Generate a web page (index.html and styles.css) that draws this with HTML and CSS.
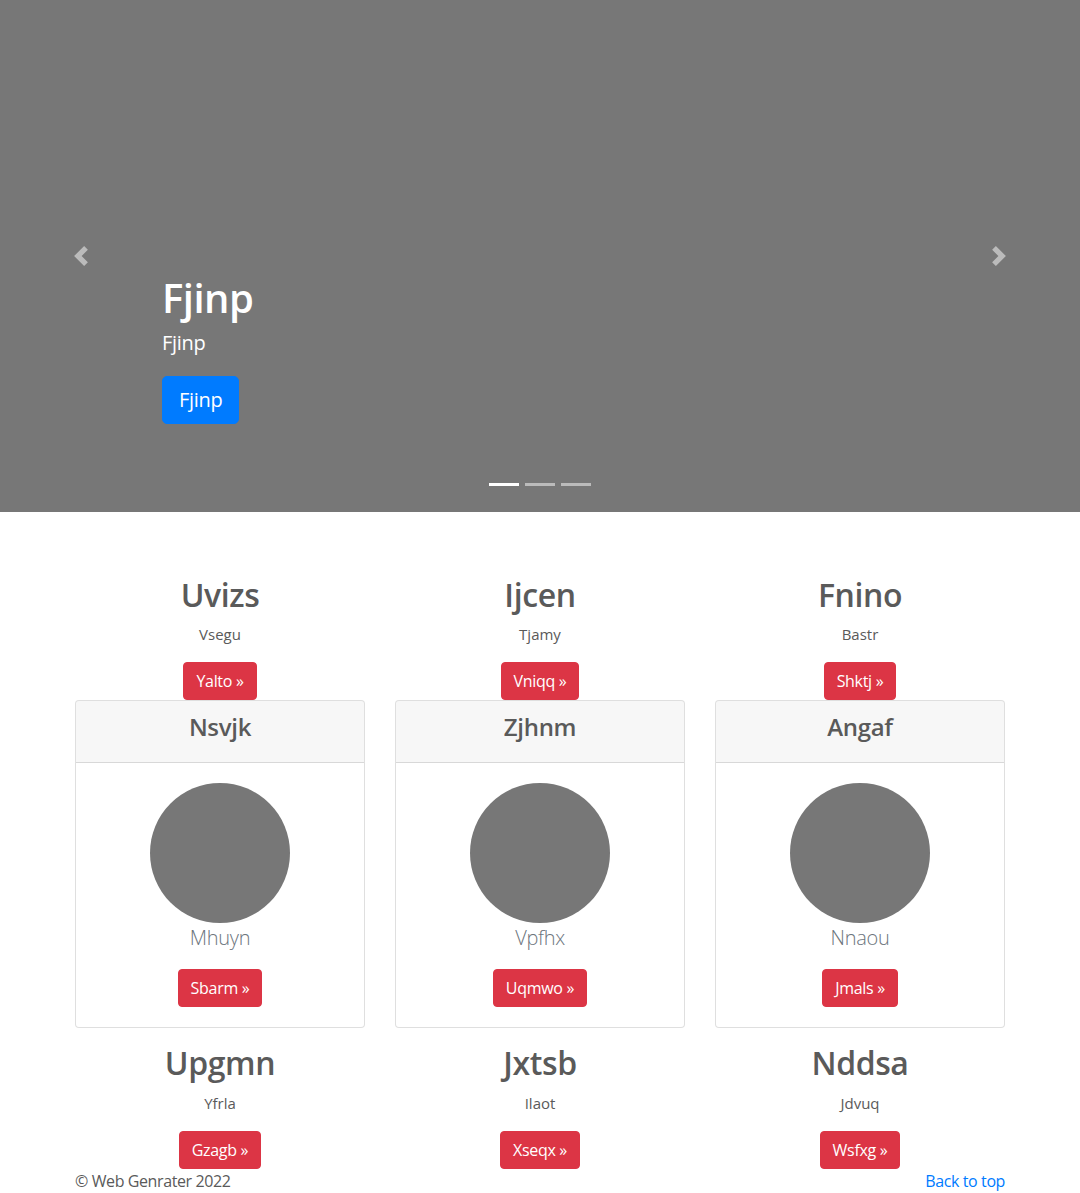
FILE: index.html
```html
<!DOCTYPE html>
<html lang="en">
<head>
<meta charset="utf-8">
<title>Carousel</title>
<link rel="stylesheet" href="styles.css">
</head>
<body>
<div class="carousel">
  <div class="slide"></div>
  <div class="caption">
    <h1>Fjinp</h1>
    <p>Fjinp</p>
    <p class="cta"><a class="btn btn-lg btn-primary" href="#">Fjinp</a></p>
  </div>
  <a class="ctrl prev" href="#"><svg width="20" height="20" viewBox="0 0 8 8"><path fill="#fff" d="M5.25 0l-4 4 4 4 1.5-1.5-2.5-2.5 2.5-2.5-1.5-1.5z"/></svg></a>
  <a class="ctrl next" href="#"><svg width="20" height="20" viewBox="0 0 8 8"><path fill="#fff" d="M2.75 0l-1.5 1.5 2.5 2.5-2.5 2.5 1.5 1.5 4-4-4-4z"/></svg></a>
  <ol class="indicators"><li class="active"></li><li></li><li></li></ol>
</div>

<div class="container marketing">
  <div class="row features">
    <div class="feature"><h2>Uvizs</h2><p>Vsegu</p><a class="btn btn-danger" href="#">Yalto &raquo;</a></div>
    <div class="feature"><h2>Ijcen</h2><p>Tjamy</p><a class="btn btn-danger" href="#">Vniqq &raquo;</a></div>
    <div class="feature"><h2>Fnino</h2><p>Bastr</p><a class="btn btn-danger" href="#">Shktj &raquo;</a></div>
  </div>
  <div class="row cards">
    <div class="card">
      <div class="card-header"><h4>Nsvjk</h4></div>
      <div class="card-body"><div class="circle"></div><p class="lead">Mhuyn</p><a class="btn btn-danger" href="#">Sbarm &raquo;</a></div>
    </div>
    <div class="card">
      <div class="card-header"><h4>Zjhnm</h4></div>
      <div class="card-body"><div class="circle"></div><p class="lead">Vpfhx</p><a class="btn btn-danger" href="#">Uqmwo &raquo;</a></div>
    </div>
    <div class="card">
      <div class="card-header"><h4>Angaf</h4></div>
      <div class="card-body"><div class="circle"></div><p class="lead">Nnaou</p><a class="btn btn-danger" href="#">Jmals &raquo;</a></div>
    </div>
  </div>
  <div class="row features">
    <div class="feature"><h2>Upgmn</h2><p>Yfrla</p><a class="btn btn-danger" href="#">Gzagb &raquo;</a></div>
    <div class="feature"><h2>Jxtsb</h2><p>Ilaot</p><a class="btn btn-danger" href="#">Xseqx &raquo;</a></div>
    <div class="feature"><h2>Nddsa</h2><p>Jdvuq</p><a class="btn btn-danger" href="#">Wsfxg &raquo;</a></div>
  </div>
</div>

<footer class="container footer">
  <p>&copy; Web Genrater 2022</p>
  <a href="#">Back to top</a>
</footer>
</body>
</html>
```

FILE: styles.css
```css
* { box-sizing: border-box; }
html, body { margin: 0; padding: 0; }
body {
  font-family: "Open Sans", "Noto Sans", sans-serif;
  font-size: 16px;
  line-height: 1.5;
  color: #5a5a5a;
  background: #fff;
}
a { text-decoration: none; }

.carousel {
  position: relative;
  height: 512px;
  margin-bottom: 64px;
  background: #777;
  overflow: hidden;
}
.slide { height: 100%; background: #777; }
.caption {
  position: absolute;
  left: 15%;
  right: 15%;
  bottom: 48px;
  padding: 20px 0;
  color: #fff;
  text-align: left;
  z-index: 10;
}
.caption h1 {
  margin: 0 0 8px;
  font-size: 40px;
  font-weight: 600;
  line-height: 1.2;
  letter-spacing: -0.5px;
}
.caption p { margin: 0 0 20px; font-size: 20px; line-height: 26px; letter-spacing: -0.3px; }
.caption p.cta { margin-bottom: 20px; display: flex; }

.btn {
  display: inline-block;
  border: 1px solid transparent;
  border-radius: 4px;
  padding: 6px 12px;
  font-size: 16px;
  line-height: 24px;
  color: #fff;
  text-align: center;
  white-space: nowrap;
  letter-spacing: -0.3px;
}
.btn-lg { padding: 8px 16px; font-size: 20px; line-height: 30px; border-radius: 5px; }
.btn-primary { background: #007bff; border-color: #007bff; }
.btn-danger { background: #dc3545; border-color: #dc3545; }

.ctrl {
  position: absolute;
  top: 0;
  bottom: 0;
  width: 15%;
  display: flex;
  align-items: center;
  justify-content: center;
  opacity: .5;
  z-index: 5;
}
.ctrl.prev { left: 0; }
.ctrl.next { right: 0; }

.indicators {
  position: absolute;
  left: 15%;
  right: 15%;
  bottom: 16px;
  margin: 0;
  padding: 0;
  list-style: none;
  display: flex;
  justify-content: center;
  z-index: 15;
}
.indicators li {
  width: 30px;
  height: 23px;
  margin: 0 3px;
  border-top: 10px solid transparent;
  border-bottom: 10px solid transparent;
  background: #fff;
  background-clip: padding-box;
  opacity: .5;
}
.indicators li.active { opacity: 1; }

.container { width: 930px; margin: 0 auto; }
.row {
  display: grid;
  grid-template-columns: repeat(3, 290px);
  column-gap: 30px;
}
.feature {
  display: flex;
  flex-direction: column;
  align-items: center;
  text-align: center;
}
.feature h2 {
  margin: 0 0 8px;
  font-size: 32px;
  font-weight: 600;
  line-height: 1.2;
  letter-spacing: -0.4px;
}
.feature p { margin: 0 0 16px; line-height: 24px; font-size: 15px; }

.cards { margin-bottom: 16px; }
.card {
  border: 1px solid rgba(0,0,0,.125);
  border-radius: 4px;
  background: #fff;
  overflow: hidden;
}
.card-header {
  padding: 12px 20px;
  background: rgba(0,0,0,.03);
  border-bottom: 1px solid rgba(0,0,0,.125);
  text-align: center;
}
.card-header h4 {
  margin: 0 0 8px;
  font-size: 24px;
  font-weight: 600;
  line-height: 1.2;
  letter-spacing: -0.3px;
}
.card-body {
  padding: 20px;
  display: flex;
  flex-direction: column;
  align-items: center;
}
.circle { width: 140px; height: 140px; border-radius: 50%; background: #777; }
.lead {
  margin: 0 0 16px;
  font-size: 20px;
  font-weight: 300;
  line-height: 30px;
  color: #6c757d;
  letter-spacing: -0.3px;
}

.footer {
  display: flex;
  justify-content: space-between;
  align-items: flex-start;
  letter-spacing: -0.4px;
}
.footer p { margin: 0; line-height: 24px; }
.footer a { color: #007bff; line-height: 24px; }
```
